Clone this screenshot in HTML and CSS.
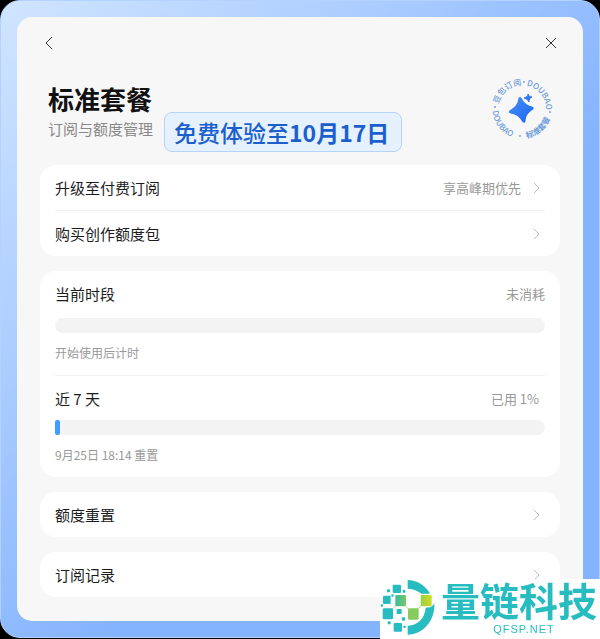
FILE: index.html
```html
<!DOCTYPE html>
<html lang="zh-CN">
<head>
<meta charset="utf-8">
<meta name="viewport" content="width=device-width, initial-scale=1">
<title>标准套餐</title>
<link rel="stylesheet" href="styles.css">
</head>
<body>
<div class="frame">
  <main class="panel">
    <nav class="topbar">
      <button class="icon-button" type="button" aria-label="返回">
        <svg width="16" height="16" viewBox="0 0 16 16"><path d="M11 2 5 8l6 6"/></svg>
      </button>
      <button class="icon-button" type="button" aria-label="关闭">
        <svg width="16" height="16" viewBox="0 0 16 16"><path d="m3 3 10 10M13 3 3 13"/></svg>
      </button>
    </nav>

    <header class="hero">
      <div class="heading">
        <h1>标准套餐</h1>
        <p>订阅与额度管理</p>
      </div>
      <div class="trial"><span>免费体验至</span><b>10月17日</b></div>
      <svg class="seal" width="64" height="64" viewBox="0 0 64 64">
        <defs>
          <path id="seal-top" d="M8 32a24 24 0 0 1 48 0a24 24 0 0 1-48 0"/>
          <path id="seal-bottom" d="M2.500 32a29.500 29.500 0 0 0 59 0a29.500 29.500 0 0 0-59 0"/>
          <linearGradient id="star" x1="0" y1="0" x2="1" y2="1">
            <stop offset="0" stop-color="#4b8ff8"/><stop offset="1" stop-color="#1767ee"/>
          </linearGradient>
        </defs>
        <g class="seal-text">
          <text font-size="8"><textPath href="#seal-top" startOffset="5">豆包订阅</textPath></text>
          <text font-size="8"><textPath href="#seal-top" startOffset="42">DOUBAO</textPath></text>
          <text font-size="8"><textPath href="#seal-bottom" startOffset="2">DOUBAO</textPath></text>
          <text font-size="8" class="seal-plan"><textPath href="#seal-bottom" startOffset="51">标准套餐</textPath></text>
          <circle cx="5" cy="30" r=".9"/><circle cx="34" cy="5" r=".9"/>
          <circle cx="60" cy="35" r=".9"/><circle cx="30" cy="59" r=".9"/>
        </g>
        <path fill="url(#star)" d="M28.500 21c.5-1.500 2-1.500 3 0 3 5 5 7 10.500 8.500 2 .5 2 2 1 3-5 3.500-7 6-7.500 11.500 0 2-2 2-3 1-3.500-5.500-6-7.500-12-8.500-2-.5-2-2-1-3 5.500-3.500 8-6 9-12.500z"/>
        <path fill="#2f78f2" d="M38 17c1 2 2 3 4 3-2 1-3 2-3 5-1-2-2-3-5-4 3-1 4-2 4-4z" stroke="#2f78f2" stroke-linejoin="round"/>
      </svg>
    </header>

    <section class="card">
      <button class="row" type="button">
        <span>升级至付费订阅</span>
        <span class="hint">享高峰期优先</span>
        <svg class="chevron" width="16" height="16" viewBox="0 0 16 16"><path d="m5 3 5 5-5 5"/></svg>
      </button>
      <button class="row" type="button">
        <span>购买创作额度包</span>
        <svg class="chevron" width="16" height="16" viewBox="0 0 16 16"><path d="m5 3 5 5-5 5"/></svg>
      </button>
    </section>

    <section class="card">
      <div class="usage usage-current">
        <div class="usage-head"><h2>当前时段</h2><span class="hint">未消耗</span></div>
        <div class="bar" role="progressbar" aria-label="当前时段" aria-valuenow="0"></div>
        <p class="caption">开始使用后计时</p>
      </div>
      <div class="usage usage-week">
        <div class="usage-head"><h2>近 7 天</h2><span class="hint">已用 1%</span></div>
        <div class="bar" role="progressbar" aria-label="近 7 天" aria-valuenow="1"><div class="fill" style="width:1%"></div></div>
        <p class="caption">9月25日 18:14 重置</p>
      </div>
    </section>

    <section class="card">
      <button class="row" type="button">
        <span>额度重置</span>
        <svg class="chevron" width="16" height="16" viewBox="0 0 16 16"><path d="m5 3 5 5-5 5"/></svg>
      </button>
    </section>

    <section class="card">
      <button class="row" type="button">
        <span>订阅记录</span>
        <svg class="chevron" width="16" height="16" viewBox="0 0 16 16"><path d="m5 3 5 5-5 5"/></svg>
      </button>
    </section>
  </main>

  <aside class="watermark">
    <svg width="55" height="57" viewBox="15 42 165 171">
      <defs>
        <linearGradient id="leaf"><stop offset="0" stop-color="#38bd9f"/><stop offset="1" stop-color="#78c766"/></linearGradient>
        <linearGradient id="lime"><stop offset="0" stop-color="#9bcf48"/><stop offset="1" stop-color="#cddb24"/></linearGradient>
      </defs>
      <path fill="#27bdc0" d="M98 45c30 1 54 17 67 41h-26c-8-8-22-14-41-15zM178 114c3 52-32 94-80 95v-27c32-2 51-22 54-54 13 0 22-3 26-14z"/>
      <path fill="none" stroke="#b9dc83" stroke-width="3" d="m38 146 39-38 38 39 38-40"/>
      <g fill="#27bdc0">
        <rect x="53" y="59" width="25" height="25" rx="3"/>
        <rect x="24" y="92" width="23" height="25" rx="3"/>
        <rect x="23" y="130" width="31" height="33" rx="4"/>
        <rect x="65" y="132" width="15" height="15" rx="2"/>
        <rect x="56" y="174" width="25" height="26" rx="3"/>
        <rect x="81" y="157" width="9" height="10" rx="2"/>
        <rect x="36" y="73" width="9" height="9" rx="2"/>
        <rect x="83" y="75" width="8" height="8" rx="2"/>
        <rect x="49" y="88" width="7" height="7" rx="2"/>
        <rect x="17" y="118" width="7" height="7" rx="2"/>
        <rect x="38" y="169" width="9" height="9" rx="2"/>
        <rect x="85" y="182" width="7" height="7" rx="2"/>
      </g>
      <rect x="61" y="90" width="32" height="34" rx="4" fill="url(#leaf)"/>
      <rect x="99" y="130" width="32" height="34" rx="4" fill="#86cb5c"/>
      <rect x="137" y="90" width="33" height="34" rx="4" fill="url(#lime)"/>
    </svg>
    <div class="brand"><strong>量链科技</strong><span>QFSP.NET</span></div>
  </aside>
</div>
</body>
</html>
```
FILE: styles.css
```css
* { box-sizing: border-box; }

body {
  margin: 0;
  background: #000;
  color: #1c1c1e;
  font-family: "Noto Sans CJK SC", sans-serif;
}

h1, h2, p { margin: 0; }

button {
  border: 0;
  padding: 0;
  background: none;
  color: inherit;
  font: inherit;
  text-align: left;
  cursor: pointer;
}

svg { display: block; flex: none; }

.frame {
  position: relative;
  padding: 16px;
  border: 1px solid #b4d2ff;
  border-radius: 20px;
  background: linear-gradient(135deg, #d0e5ff 0%, #a9cbff 32%, #84b3ff 60%, #84b3ff 100%) border-box;
}

.panel {
  display: flex;
  flex-direction: column;
  gap: 15px;
  padding: 14px 23px 24px;
  border-radius: 15px;
  background: #f7f7f7;
}

.topbar {
  display: flex;
  justify-content: space-between;
}

.icon-button {
  display: grid;
  place-items: center;
  width: 18px;
  height: 24px;
}

.icon-button path, .chevron path {
  fill: none;
  stroke: #333;
  stroke-width: 1;
}

.hero {
  display: flex;
  align-items: flex-end;
  padding: 0 6px 0 8px;
  margin-bottom: -2px;
  height: 82px;
}

.heading { padding-bottom: 11px; }

h1 {
  font-size: 26px;
  line-height: 36px;
  color: #111;
}

.heading p {
  font-size: 15px;
  line-height: 24px;
  color: #888;
}

.trial {
  margin-left: 11px;
  padding: 0 12px 0 9px;
  border: 1px solid #b5d4fc;
  border-radius: 8px;
  background: #e5f1ff;
  color: #1b5fcc;
  font-size: 23px;
  font-weight: 500;
  line-height: 38px;
  white-space: nowrap;
}

.trial b { font-weight: 700; }

.seal {
  margin: 0 0 11px auto;
}

.seal-text {
  fill: #6e9cdb;
  font-weight: 500;
}

.seal-plan { font-weight: 700; }

.card {
  padding: 0 15px;
  border-radius: 16px;
  background: #fff;
}

.row {
  display: flex;
  align-items: center;
  width: 100%;
  height: 45px;
  font-size: 15px;
  line-height: 24px;
}

.row + .row, .usage + .usage { border-top: 1px solid #f1f1f1; }
.row + .row { height: 46px; }

.hint {
  margin-left: auto;
  color: #999;
  font-size: 13px;
}

.chevron { margin-left: auto; }
.hint + .chevron { margin-left: 8px; }
.chevron path { stroke: #bbb; }

.usage { padding: 11px 0 12px; }

.usage-head {
  display: flex;
  align-items: center;
  line-height: 24px;
}

.usage-current .usage-head { margin-bottom: 12px; }
.usage-week .usage-head { margin-bottom: 9px; padding-right: 6px; }

h2 {
  font-size: 15px;
  font-weight: 400;
}

.bar {
  height: 15px;
  border-radius: 8px;
  background: #f3f3f3;
}

.usage-week .bar { border-radius: 2px 8px 8px 2px; }

.fill {
  height: 100%;
  border-radius: 2px;
  background: #409cff;
}

.caption {
  margin-top: 10px;
  color: #999;
  font-size: 12px;
  line-height: 20px;
}

.watermark {
  position: fixed;
  right: 0;
  bottom: 0;
  display: flex;
  width: 220px;
  height: 60px;
  background: #fff;
  color: #27bdc0;
}

.brand {
  display: flex;
  flex-direction: column;
  align-items: center;
  gap: 4px;
  margin-left: 6px;
  white-space: nowrap;
}

.brand strong {
  font-size: 39px;
  font-weight: 700;
  line-height: 40px;
}

.brand span {
  font: 11px/12px "Liberation Sans", sans-serif;
  letter-spacing: 1px;
  margin-left: 10px;
}
```
